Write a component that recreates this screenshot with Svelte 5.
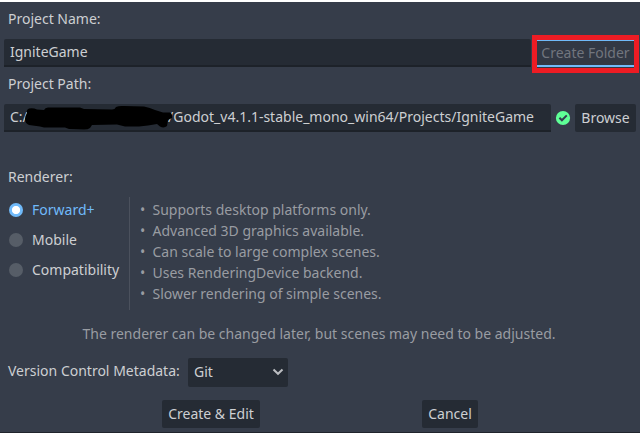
<script>
  let renderer = $state('Forward+');
  const renderers = ['Forward+', 'Mobile', 'Compatibility'];
  const features = [
    'Supports desktop platforms only.',
    'Advanced 3D graphics available.',
    'Can scale to large complex scenes.',
    'Uses RenderingDevice backend.',
    'Slower rendering of simple scenes.'
  ];
</script>

<main class="dialog">
  <div class="label name-label">Project Name:</div>
  <div class="row">
    <div class="field name-field">IgniteGame</div>
    <button class="create-folder">Create Folder</button>
  </div>

  <div class="label path-label">Project Path:</div>
  <div class="row">
    <div class="field path-field">
      <span>C:/</span>
      <span class="path-end">/Godot_v4.1.1-stable_mono_win64/Projects/IgniteGame</span>
      <svg class="redaction" width="152" height="28" viewBox="20 104 152 28">
        <path d="M29 108.5Q33 107.5 37 109.5L44 110Q45 107.5 48 107.5H80L84 109L112 109.5Q115 109.5 116 107Q119 105.5 124 106L144 106.5Q150 107.5 155 110L163 112.5H170Q173 114 172 118L168 120L167 126Q164 128.5 160 126.5L157 124L148 125.5L139 126.5H125L117 124.5L92 125L90 128Q88 129.5 84 129.5L69 129L65 127.5H44L40 126.5L29 125Q25 123.5 25 119Q25 116 27 113Q26 110 29 108.5Z" />
      </svg>
    </div>
    <svg class="status" width="16" height="16" viewBox="0 0 16 16">
      <circle cx="8" cy="8" r="7.1" fill="#5fff97" />
      <path d="M4.4 7.8L6.9 10.3L11.8 5.4" fill="none" stroke="#333b4f" stroke-width="2" />
    </svg>
    <button class="button browse">Browse</button>
  </div>

  <div class="label renderer-label">Renderer:</div>
  <section class="renderer">
    <div class="options">
      {#each renderers as name}
        <button class="option" class:selected={renderer === name} onclick={() => (renderer = name)}>
          <i class="radio"></i><span>{name}</span>
        </button>
      {/each}
    </div>
    <ul>
      {#each features as feature}
        <li><span class="bullet">•</span>{feature}</li>
      {/each}
    </ul>
  </section>

  <p class="note">The renderer can be changed later, but scenes may need to be adjusted.</p>

  <div class="metadata">
    <span class="metadata-label">Version Control Metadata:</span>
    <button class="button select">
      <span>Git</span>
      <svg width="12" height="8" viewBox="0 0 12 8">
        <path d="M1.5 1.5L6 5.8L10.5 1.5" fill="none" stroke="#bcbec2" stroke-width="2" />
      </svg>
    </button>
  </div>

  <footer>
    <button class="button create">Create &amp; Edit</button>
    <button class="button cancel">Cancel</button>
  </footer>
</main>

<style>
  :global(body) {
    margin: 0;
    background: #363d4a;
  }
  .dialog,
  button {
    font: 14px/20px 'Noto Sans', sans-serif;
    color: #cdcfd2;
  }
  .dialog {
    box-sizing: border-box;
    width: 640px;
    height: 433px;
    overflow: hidden;
    border-top: 2px solid #fff;
    border-bottom: 1px solid #20242c;
    background: #363d4a;
    white-space: nowrap;
  }
  button {
    box-sizing: border-box;
    margin: 0;
    padding: 0;
    border: 0;
    background: none;
    white-space: nowrap;
  }
  .label {
    padding-left: 8px;
  }
  .name-label {
    padding-top: 7px;
    height: 30px;
  }
  .row {
    display: flex;
    height: 28px;
    padding-left: 4px;
  }
  .field {
    box-sizing: border-box;
    height: 28px;
    padding: 3px 6px;
    border-bottom: 2px solid #1d2229;
    border-radius: 2px 2px 0 0;
    background: #252b34;
  }
  .name-field {
    width: 527px;
  }
  .create-folder {
    width: 107px;
    height: 38px;
    margin: -4px 0 0 1px;
    padding-bottom: 2px;
    border: 5px solid #ed1c24;
    color: #71757e;
    background: linear-gradient(#70bafa, #70bafa) 0 0 / 100% 1px no-repeat,
      linear-gradient(#70bafa, #70bafa) 0 25px / 100% 2px no-repeat, #323844;
  }
  .path-label {
    padding-top: 7px;
    height: 30px;
  }
  .path-field {
    position: relative;
    display: flex;
    width: 547px;
  }
  .path-end {
    margin-left: auto;
    margin-right: 11px;
  }
  .redaction {
    position: absolute;
    left: 16px;
    top: 0;
  }
  .status {
    margin: 6px 4px 0;
  }
  .button {
    height: 28px;
    border-radius: 2px;
    background: #252b34;
  }
  .browse {
    width: 61px;
  }
  .renderer-label {
    padding-top: 35px;
    height: 30px;
  }
  .renderer {
    display: flex;
    height: 113px;
  }
  .options {
    box-sizing: border-box;
    width: 130px;
    padding-left: 9px;
    border-right: 1px solid #4b515d;
  }
  .option {
    display: flex;
    align-items: center;
    gap: 9px;
    height: 30px;
    margin-top: -2px;
    margin-bottom: 2px;
  }
  .radio {
    box-sizing: border-box;
    width: 14px;
    height: 14px;
    border-radius: 50%;
    background: #565d67;
  }
  .selected {
    color: #70bafa;
  }
  .selected .radio {
    background: radial-gradient(circle, #fff 3.7px, #70bafa 4.5px);
  }
  ul {
    margin: 2px 0 0 10px;
    padding: 0;
    list-style: none;
    line-height: 21px;
    color: #999ca2;
  }
  li {
    display: flex;
  }
  .bullet {
    width: 12.5px;
  }
  .note {
    margin: 14px 0 0;
    padding-right: 2px;
    text-align: center;
    color: #999ca2;
  }
  .metadata {
    display: flex;
    height: 29px;
    margin-top: 14px;
    padding-left: 8px;
  }
  .metadata-label {
    width: 180px;
    padding-top: 3px;
  }
  .select {
    display: flex;
    align-items: center;
    justify-content: space-between;
    width: 100px;
    height: 29px;
    padding: 0 4px 2px 6px;
  }
  footer {
    display: flex;
    gap: 162px;
    padding: 13px 0 0 162px;
  }
  .create {
    width: 98px;
  }
  .cancel {
    width: 56px;
  }
</style>
